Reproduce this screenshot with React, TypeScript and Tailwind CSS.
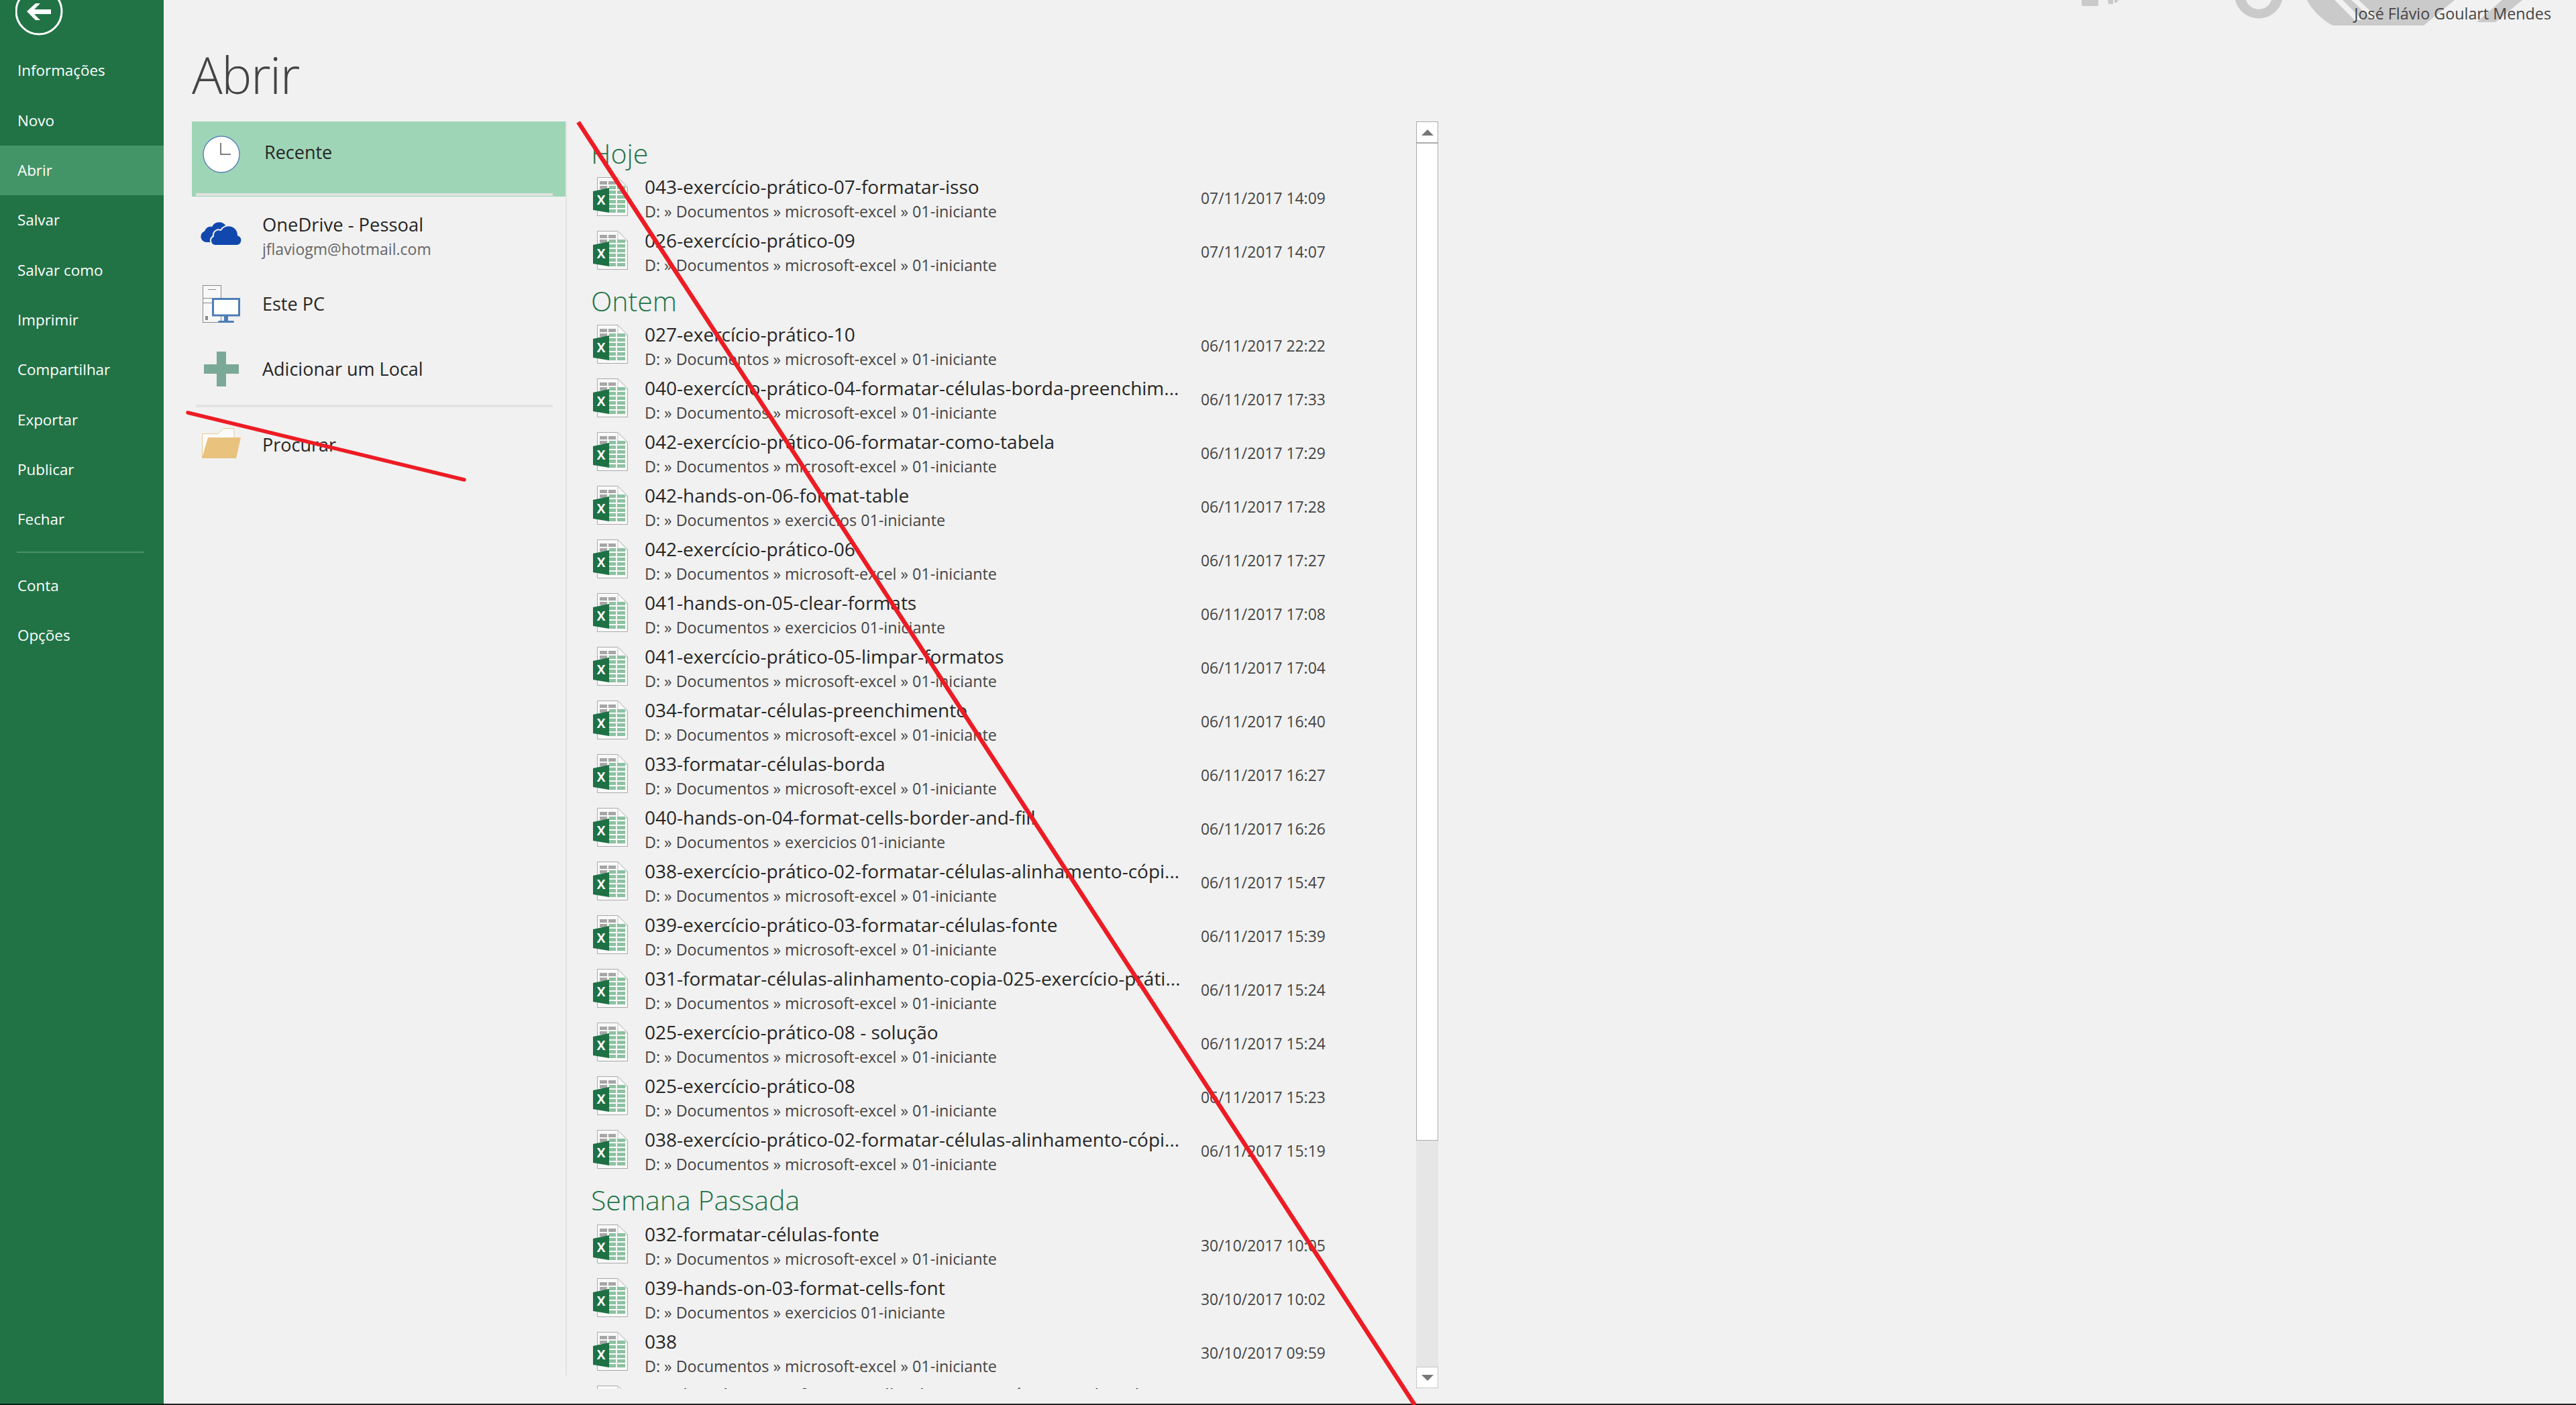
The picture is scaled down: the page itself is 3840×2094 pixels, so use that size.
const FONT = "font-['Open_Sans',sans-serif]";

const sidebarTop = ["Informações", "Novo", "Abrir", "Salvar", "Salvar como", "Imprimir", "Compartilhar", "Exportar", "Publicar", "Fechar"];

const MS = "D: » Documentos » microsoft-excel » 01-iniciante";
const EX = "D: » Documentos » exercicios 01-iniciante";

const groups = [
  {
    title: "Hoje",
    height: "h-[60px]",
    files: [
      { name: "043-exercício-prático-07-formatar-isso", path: MS, date: "07/11/2017 14:09" },
      { name: "026-exercício-prático-09", path: MS, date: "07/11/2017 14:07" },
    ],
  },
  {
    title: "Ontem",
    height: "h-[60px]",
    files: [
      { name: "027-exercício-prático-10", path: MS, date: "06/11/2017 22:22" },
      { name: "040-exercício-prático-04-formatar-células-borda-preenchim...", path: MS, date: "06/11/2017 17:33" },
      { name: "042-exercício-prático-06-formatar-como-tabela", path: MS, date: "06/11/2017 17:29" },
      { name: "042-hands-on-06-format-table", path: EX, date: "06/11/2017 17:28" },
      { name: "042-exercício-prático-06", path: MS, date: "06/11/2017 17:27" },
      { name: "041-hands-on-05-clear-formats", path: EX, date: "06/11/2017 17:08" },
      { name: "041-exercício-prático-05-limpar-formatos", path: MS, date: "06/11/2017 17:04" },
      { name: "034-formatar-células-preenchimento", path: MS, date: "06/11/2017 16:40" },
      { name: "033-formatar-células-borda", path: MS, date: "06/11/2017 16:27" },
      { name: "040-hands-on-04-format-cells-border-and-fill", path: EX, date: "06/11/2017 16:26" },
      { name: "038-exercício-prático-02-formatar-células-alinhamento-cópi...", path: MS, date: "06/11/2017 15:47" },
      { name: "039-exercício-prático-03-formatar-células-fonte", path: MS, date: "06/11/2017 15:39" },
      { name: "031-formatar-células-alinhamento-copia-025-exercício-práti...", path: MS, date: "06/11/2017 15:24" },
      { name: "025-exercício-prático-08 - solução", path: MS, date: "06/11/2017 15:24" },
      { name: "025-exercício-prático-08", path: MS, date: "06/11/2017 15:23" },
      { name: "038-exercício-prático-02-formatar-células-alinhamento-cópi...", path: MS, date: "06/11/2017 15:19" },
    ],
  },
  {
    title: "Semana Passada",
    height: "h-[61px]",
    files: [
      { name: "032-formatar-células-fonte", path: MS, date: "30/10/2017 10:05" },
      { name: "039-hands-on-03-format-cells-font", path: EX, date: "30/10/2017 10:02" },
      { name: "038", path: MS, date: "30/10/2017 09:59" },
      { name: "038-hands-on-02-format-cells-alignment-cópia-025-hand...", path: MS, date: "30/10/2017 09:58" },
    ],
  },
];

function ExcelIcon() {
  const rows = [13, 20, 27, 34, 41, 48];
  return (
    <svg width="52" height="58" viewBox="0 0 52 58" className="shrink-0">
      <path d="M6.5 .5H37L51.5 15V57.5H6.5Z" fill="#f9f9f9" stroke="#a9a9a9" />
      <path d="M37 .5V15H51.5" fill="none" stroke="#c4c4c4" />
      <rect x="10" y="6" width="11" height="5" fill="#a6a6a6" />
      <rect x="23" y="6" width="11" height="5" fill="#a6a6a6" />
      <rect x="10" y="13" width="11" height="5" fill="#a6a6a6" />
      {rows.map((y) => (
        <g key={y} fill="#8cc2a1">
          <rect x="24" y={y} width="10" height="5" />
          <rect x="36" y={y} width="12" height="5" />
        </g>
      ))}
      <polygon points="0,21 24,16 24,53 0,49" fill="#1e7145" />
      <text x="12" y="41" textAnchor="middle" fontSize="19" fontWeight="700" fill="#fff" fontFamily="Open Sans, sans-serif">
        X
      </text>
    </svg>
  );
}

function FileRow({ name, path, date }: { name: string; path: string; date: string }) {
  return (
    <div className="flex h-[80px] shrink-0 items-start pl-[39px]">
      <div className="mt-[8px]">
        <ExcelIcon />
      </div>
      <div className="ml-[25px] w-[829px] shrink-0">
        <div className="mt-[3px] h-[38px] whitespace-nowrap text-[28px] leading-[38px] text-[#262626]">{name}</div>
        <div className="h-[36px] whitespace-nowrap text-[23.3px] leading-[36px] text-[#444444]">{path}</div>
      </div>
      <div className="mt-[24px] whitespace-nowrap text-[22.9px] leading-[32px] text-[#444444]">{date}</div>
    </div>
  );
}

export default function App() {
  return (
    <div className={`relative flex h-[2094px] w-full flex-col overflow-hidden bg-[#f1f1f1] ${FONT}`}>
      <div className="flex h-[2092px] w-full">
        {/* Sidebar */}
        <div className="flex w-[244px] shrink-0 flex-col bg-[#217346] text-white">
          <div className="h-[68px] pl-[23px]">
            <svg width="72" height="68" viewBox="23 0 72 68">
              <circle cx="58" cy="17" r="34" fill="none" stroke="#fff" strokeWidth="3" />
              <polygon points="40,17 53,5 60,5 51,14 76,14 76,21 51,21 60,30 53,30" fill="#fff" />
            </svg>
          </div>
          {sidebarTop.map((item) => (
            <div
              key={item}
              className={`flex h-[74.33px] items-center pl-[26px] text-[22.4px] ${item === "Abrir" ? "bg-[#439467]" : ""}`}
            >
              {item}
            </div>
          ))}
          <div className="flex h-[24px] items-center px-[25px]">
            <div className="h-[2px] w-[190px] bg-[#4c8f6b]" />
          </div>
          <div className="flex h-[74.33px] items-center pl-[26px] text-[22.4px]">Conta</div>
          <div className="flex h-[74.33px] items-center pl-[26px] text-[22.4px]">Opções</div>
        </div>

        {/* Main */}
        <div className="flex min-w-0 flex-1 flex-col">
          <div className="flex h-[181px] shrink-0 items-start justify-between pl-[42px]">
            <div className="-mb-[40px] mt-[56px] text-[76px] font-light leading-[110px] tracking-[-1.5px] text-[#444444]">Abrir</div>
            <div className="relative z-10 mr-[37px] mt-[3px] text-[23.3px] leading-[34px] text-[#444444]">José Flávio Goulart Mendes</div>
          </div>
          <div className="flex min-h-0 flex-1">
            {/* Places */}
            <div className="ml-[42px] h-[1869px] w-[559px] shrink-0 border-r-2 border-[#e3e3e3] text-[#262626]">
              <div className="flex h-[112px] flex-col bg-[#9fd5b7]">
                <div className="flex h-[107px] items-start">
                  <svg width="56" height="56" viewBox="0 0 56 56" className="ml-[16px] mt-[21px]">
                    <circle cx="28" cy="28" r="27" fill="#fff" stroke="#5b86b8" strokeWidth="1.5" />
                    <path d="M27 11V28H42" fill="none" stroke="#555" strokeWidth="1.5" />
                  </svg>
                  <div className="ml-[36px] mt-[28px] text-[27px] leading-[36px]">Recente</div>
                </div>
                <div className="ml-[6px] h-[4px] w-[532px] bg-[#e1e1e1]" />
              </div>
              <div className="flex h-[112px] items-center">
                <svg width="62" height="35" viewBox="0 0 62 35" className="ml-[13px] -mt-[2px]">
                  <path d="M9 30A8.5 8.5 0 0 1 6 13.5A9 9 0 0 1 17 7A12 12 0 0 1 38 6A10 10 0 0 1 44 14L30 30Z" fill="#1148ad" />
                  <path d="M21 35H54A8 8 0 0 0 56 19.5A14 14 0 0 0 30 12A8 8 0 0 0 19 21A7.5 7.5 0 0 0 21 35Z" fill="#1148ad" stroke="#f1f1f1" strokeWidth="2" />
                </svg>
                <div className="ml-[30px] mt-[8px]">
                  <div className="text-[27.4px] leading-[37px]">OneDrive - Pessoal</div>
                  <div className="text-[23px] leading-[37px] text-[#666666]">jflaviogm@hotmail.com</div>
                </div>
              </div>
              <div className="flex h-[96px] items-center">
                <svg width="56" height="56" viewBox="0 0 56 56" className="ml-[16px]">
                  <rect x=".5" y=".5" width="27" height="55" fill="#f8f8f8" stroke="#8a8a8a" />
                  <path d="M0 19.5H27M0 26.5H27M8 6.5H20" stroke="#8a8a8a" />
                  <rect x="4" y="46" width="4" height="6" fill="#8a8a8a" />
                  <rect x="15.5" y="20.5" width="39" height="24.5" fill="#fff" stroke="#4d7eb5" strokeWidth="3" />
                  <rect x="32" y="46" width="6" height="7" fill="#4d7eb5" />
                  <rect x="23" y="53" width="24" height="3" rx="1.5" fill="#4d7eb5" />
                </svg>
                <div className="ml-[33px] text-[27px]">Este PC</div>
              </div>
              <div className="flex h-[98px] items-center">
                <svg width="52" height="52" viewBox="0 0 52 52" className="ml-[18px]">
                  <path d="M19 0H33V19H52V33H33V52H19V33H0V19H19Z" fill="#7ba998" />
                </svg>
                <div className="ml-[35px] text-[27px]">Adicionar um Local</div>
              </div>
              <div className="ml-[6px] mt-[4px] h-[4px] w-[532px] bg-[#e3e3e3]" />
              <div className="flex h-[112px] items-center">
                <svg width="58" height="45" viewBox="0 0 58 45" className="ml-[15px] -mt-[6px]">
                  <path d="M.5 45V8.5H24L32 .5H48V14" fill="#fbfbfb" stroke="#e8c98f" />
                  <polygon points="9,14 58,14 51,45 0,45" fill="#e9c27e" />
                </svg>
                <div className="ml-[32px] text-[27px]">Procurar</div>
              </div>
            </div>

            {/* File list */}
            <div className="h-[1889px] w-[1266px] shrink-0 overflow-hidden pt-[15px]">
              {groups.map((group) => (
                <div key={group.title}>
                  <div className={`${group.height} pl-[36px] pt-[5px] text-[41px] font-light leading-[54px] text-[#217346]`}>{group.title}</div>
                  {group.files.map((file, i) => (
                    <FileRow key={i} {...file} />
                  ))}
                </div>
              ))}
            </div>

            {/* Scrollbar */}
            <div className="flex h-[1888px] w-[33px] shrink-0 flex-col bg-[#e6e6e6]">
              <div className="flex h-[33px] items-center justify-center border-x border-t border-b-2 border-[#ababab] bg-white">
                <div className="h-0 w-0 border-x-[9px] border-b-[9px] border-x-transparent border-b-[#777777]" />
              </div>
              <div className="h-[1486px] border-x border-b border-[#ababab] bg-white" />
              <div className="flex-1" />
              <div className="flex h-[32px] items-center justify-center border border-[#c6c6c6] bg-white">
                <div className="h-0 w-0 border-x-[9px] border-t-[9px] border-x-transparent border-t-[#777777]" />
              </div>
            </div>
          </div>
        </div>
      </div>
      <div className="flex h-[2px] w-full">
        <div className="w-[244px] bg-[#0c1f14]" />
        <div className="flex-1 bg-[#222222]" />
      </div>

      {/* Cut-off ribbon art behind the account name */}
      <svg className="absolute left-[3100px] top-0" width="680" height="40" viewBox="3100 0 680 40">
        <path d="M3103 0H3128V9H3106Q3103 9 3103 6ZM3142 0H3150V6H3143ZM3152 0H3158L3155 4H3152Z" fill="#cacaca" />
        <path d="M3332 0A36 36 0 0 0 3402 0H3386A20 20 0 0 1 3348 0Z" fill="#cacaca" />
        <path d="M3439 0Q3450 22 3477 38H3613L3659 0Z" fill="#cacaca" />
        <path d="M3480 0L3510 30H3522L3492 0ZM3505 0L3535 28H3546L3516 0Z" fill="#f1f1f1" />
        <path d="M3707 0L3760 0L3720 33H3692L3730 0Z" fill="#cacaca" />
      </svg>

      {/* Red strike-through lines drawn over the capture */}
      <svg className="pointer-events-none absolute left-0 top-0" width="3840" height="2094" viewBox="0 0 3840 2094">
        <line x1="862" y1="182" x2="2109" y2="2094" stroke="#ed1c24" strokeWidth="6.5" />
        <line x1="280" y1="615" x2="692" y2="715" stroke="#ed1c24" strokeWidth="5.5" strokeLinecap="round" />
      </svg>
    </div>
  );
}
